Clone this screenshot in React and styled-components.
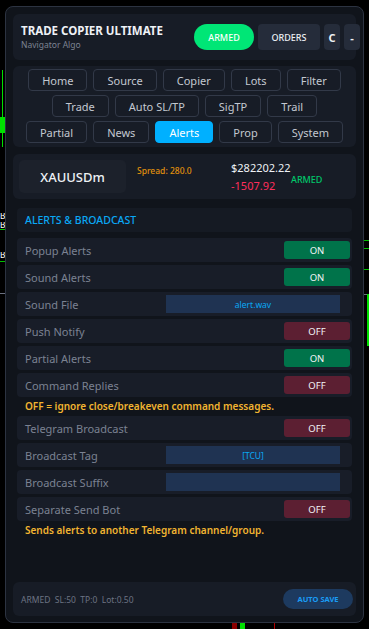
import React from 'react'
import styled, { createGlobalStyle } from 'styled-components'

const GlobalStyle = createGlobalStyle`
  html, body {
    margin: 0;
    padding: 0;
    background: #000;
  }
  body {
    font-family: "Noto Sans", "Open Sans", sans-serif;
  }
  * { box-sizing: border-box; }
`

const tabRows = [
  ['Home', 'Source', 'Copier', 'Lots', 'Filter'],
  ['Trade', 'Auto SL/TP', 'SigTP', 'Trail'],
  ['Partial', 'News', 'Alerts', 'Prop', 'System'],
]

const rows = [
  { label: 'Popup Alerts', kind: 'toggle', on: true },
  { label: 'Sound Alerts', kind: 'toggle', on: true },
  { label: 'Sound File', kind: 'input', value: 'alert.wav' },
  { label: 'Push Notify', kind: 'toggle', on: false },
  { label: 'Partial Alerts', kind: 'toggle', on: true },
  { label: 'Command Replies', kind: 'toggle', on: false },
  { note: 'OFF = ignore close/breakeven command messages.' },
  { label: 'Telegram Broadcast', kind: 'toggle', on: false },
  { label: 'Broadcast Tag', kind: 'input', value: '[TCU]' },
  { label: 'Broadcast Suffix', kind: 'input', value: '' },
  { label: 'Separate Send Bot', kind: 'toggle', on: false },
  { note: 'Sends alerts to another Telegram channel/group.' },
]

const App = () => {
  return (
    <Screen>
      <GlobalStyle />
      <ChartBits>
        <Wick $x={2} $y={70} $h={77} />
        <Body $x={0} $y={117} $w={5} $h={16} />
        <Tick $x={0} $y={213}>B</Tick>
        <Tick $x={0} $y={222}>B</Tick>
        <Tick $x={0} $y={252}>B</Tick>
        <HLine $x={0} $y={229} $w={5} $c="#00c000" />
        <HLine $x={0} $y={261} $w={5} $c="#00c000" />
        <HLine $x={0} $y={293} $w={5} $c="#6a7080" />
        <HLine $x={364} $y={240} $w={5} $c="#00c000" />
        <HLine $x={364} $y={248} $w={5} $c="#00c000" />
        <HLine $x={364} $y={269} $w={5} $c="#00c000" />
        <HLine $x={364} $y={294} $w={5} $c="#6a7080" />
        <Body $x={367} $y={294} $w={2} $h={52} />
        <Block $x={232} $y={623} $w={5} $h={6} $c="#8a0000" />
        <Block $x={240} $y={623} $w={5} $h={6} $c="#00e000" />
        <Block $x={274} $y={623} $w={1} $h={6} $c="#b00000" />
      </ChartBits>

      <Panel>
        <HeaderCard>
          <Brand>
            <Title>TRADE COPIER ULTIMATE</Title>
            <Sub>Navigator Algo</Sub>
          </Brand>
          <HeaderButtons>
            <ArmedPill>ARMED</ArmedPill>
            <HeadBtn $w={62}>ORDERS</HeadBtn>
            <HeadBtn $w={16} $big>C</HeadBtn>
            <HeadBtn $w={16} $big>-</HeadBtn>
          </HeaderButtons>
        </HeaderCard>

        <TabsCard>
          {tabRows.map((r, i) => (
            <TabRow key={i}>
              {r.map((t) => (
                <Tab key={t} $active={t === 'Alerts'}>{t}</Tab>
              ))}
            </TabRow>
          ))}
        </TabsCard>

        <SymbolCard>
          <SymbolBox>XAUUSDm</SymbolBox>
          <Spread>Spread: 280.0</Spread>
          <Money>
            <Balance>$282202.22</Balance>
            <Pnl>-1507.92</Pnl>
          </Money>
          <ArmedText>ARMED</ArmedText>
        </SymbolCard>

        <Content>
          <SectionHead>ALERTS &amp; BROADCAST</SectionHead>
          {rows.map((r, i) =>
            r.note ? (
              <Note key={i}>{r.note}</Note>
            ) : (
              <Row key={i}>
                <Label>{r.label}</Label>
                {r.kind === 'toggle' ? (
                  <Toggle $on={r.on}>{r.on ? 'ON' : 'OFF'}</Toggle>
                ) : (
                  <Field>{r.value}</Field>
                )}
              </Row>
            )
          )}
        </Content>

        <Footer>
          <Status>ARMED&nbsp; SL:50&nbsp; TP:0&nbsp; Lot:0.50</Status>
          <SaveBtn>AUTO SAVE</SaveBtn>
        </Footer>
      </Panel>
    </Screen>
  )
}

export default App

const Screen = styled.div`
  position: relative;
  width: 369px;
  height: 629px;
  overflow: hidden;
  background: #000;
  padding: 6px 5px 6px 5px;
`

const ChartBits = styled.div`
  position: absolute;
  inset: 0;
`

const Wick = styled.div`
  position: absolute;
  left: ${(p) => p.$x}px;
  top: ${(p) => p.$y}px;
  width: 1px;
  height: ${(p) => p.$h}px;
  background: #00e000;
`

const Body = styled.div`
  position: absolute;
  left: ${(p) => p.$x}px;
  top: ${(p) => p.$y}px;
  width: ${(p) => p.$w}px;
  height: ${(p) => p.$h}px;
  background: #00e000;
`

const Block = styled.div`
  position: absolute;
  left: ${(p) => p.$x}px;
  top: ${(p) => p.$y}px;
  width: ${(p) => p.$w}px;
  height: ${(p) => p.$h}px;
  background: ${(p) => p.$c};
`

const HLine = styled.div`
  position: absolute;
  left: ${(p) => p.$x}px;
  top: ${(p) => p.$y}px;
  width: ${(p) => p.$w}px;
  height: 1px;
  background: ${(p) => p.$c};
`

const Tick = styled.div`
  position: absolute;
  left: ${(p) => p.$x}px;
  top: ${(p) => p.$y}px;
  font-family: "DejaVu Sans", sans-serif;
  font-size: 8px;
  line-height: 8px;
  height: 8px;
  overflow: hidden;
  color: #fff;
`

const Panel = styled.div`
  position: relative;
  height: 617px;
  background: #10141b;
  border: 1px solid #2c3341;
  border-radius: 8px;
  padding: 7px 7px 6px 7px;
  display: flex;
  flex-direction: column;
`

const HeaderCard = styled.div`
  height: 46px;
  background: #171c26;
  border-radius: 6px;
  display: flex;
  align-items: center;
  justify-content: space-between;
  padding: 0 0 0 8px;
`

const Brand = styled.div`
  display: flex;
  flex-direction: column;
`

const Title = styled.div`
  font-size: 11.5px;
  font-weight: 700;
  color: #eef1f5;
  line-height: 15px;
`

const Sub = styled.div`
  font-size: 8.5px;
  color: #7d8392;
  line-height: 12px;
  margin-top: 1px;
`

const HeaderButtons = styled.div`
  display: flex;
  gap: 4px;
  margin-right: -4px;
`

const ArmedPill = styled.div`
  width: 60px;
  height: 26px;
  border-radius: 13px;
  background: #00e676;
  color: #fff;
  font-size: 9px;
  font-weight: 500;
  display: flex;
  align-items: center;
  justify-content: center;
`

const HeadBtn = styled.div`
  width: ${(p) => p.$w}px;
  height: 26px;
  border-radius: 4px;
  background: #252c3a;
  color: #eef1f5;
  font-size: ${(p) => (p.$big ? '11px' : '9px')};
  font-weight: ${(p) => (p.$big ? 700 : 500)};
  display: flex;
  align-items: center;
  justify-content: center;
`

const TabsCard = styled.div`
  margin-top: 6px;
  height: 81px;
  background: #171c26;
  border-radius: 6px;
  padding: 3px 0;
  display: flex;
  flex-direction: column;
  gap: 4px;
`

const TabRow = styled.div`
  display: flex;
  justify-content: center;
  gap: 6px;
`

const Tab = styled.div`
  height: 22px;
  padding: 0 13px;
  min-width: 50px;
  border-radius: 4px;
  border: 1px solid ${(p) => (p.$active ? '#00b0ff' : '#323948')};
  background: ${(p) => (p.$active ? '#00b0ff' : 'transparent')};
  color: ${(p) => (p.$active ? '#ffffff' : '#c3c8d1')};
  font-size: 11px;
  display: flex;
  align-items: center;
  justify-content: center;
`

const SymbolCard = styled.div`
  margin-top: 7px;
  height: 45px;
  background: #171c26;
  border-radius: 6px;
  padding: 6px;
  display: flex;
  align-items: center;
`

const SymbolBox = styled.div`
  width: 107px;
  height: 33px;
  border-radius: 5px;
  background: #1c212b;
  color: #eef1f5;
  font-size: 13px;
  font-weight: 500;
  display: flex;
  align-items: center;
  justify-content: center;
`

const Spread = styled.div`
  margin-left: 11px;
  align-self: flex-start;
  margin-top: 5px;
  font-size: 8.5px;
  font-weight: 500;
  color: #e0900c;
  width: 94px;
`

const Money = styled.div`
  display: flex;
  flex-direction: column;
  gap: 3px;
  width: 60px;
`

const Balance = styled.div`
  font-size: 11px;
  color: #eef1f5;
  line-height: 15px;
`

const Pnl = styled.div`
  font-size: 11px;
  color: #ff2e5c;
  line-height: 15px;
`

const ArmedText = styled.div`
  font-size: 9px;
  color: #00c86a;
  font-weight: 500;
  margin-top: 5px;
`

const Content = styled.div`
  flex: 1;
  padding: 9px 4px 0 4px;
  display: flex;
  flex-direction: column;
  gap: 3px;
`

const SectionHead = styled.div`
  height: 24px;
  background: #151a23;
  border-radius: 4px;
  padding-left: 8px;
  margin-bottom: 3px;
  display: flex;
  align-items: center;
  color: #0aa8f5;
  font-size: 10.5px;
  font-weight: 500;
`

const Row = styled.div`
  height: 24px;
  background: #181d28;
  border-radius: 4px;
  padding: 0 2px 0 8px;
  display: flex;
  align-items: center;
  justify-content: space-between;
`

const Label = styled.div`
  font-size: 11px;
  color: #7b8292;
`

const Toggle = styled.div`
  width: 66px;
  height: 18px;
  border-radius: 3px;
  background: ${(p) => (p.$on ? '#00734a' : '#5c1f32')};
  color: #f3f5f8;
  font-size: 9.5px;
  display: flex;
  align-items: center;
  justify-content: center;
`

const Field = styled.div`
  width: 174px;
  height: 18px;
  margin-right: 10px;
  background: #1f3352;
  color: #0aa8f5;
  font-size: 8.5px;
  display: flex;
  align-items: center;
  justify-content: center;
`

const Note = styled.div`
  font-size: 10px;
  font-weight: 600;
  color: #f2b431;
  padding-left: 8px;
  line-height: 13px;
  height: 13px;
`

const Footer = styled.div`
  height: 34px;
  background: #171c26;
  border-radius: 6px;
  padding: 0 3px 0 8px;
  display: flex;
  align-items: center;
  justify-content: space-between;
`

const Status = styled.div`
  font-size: 8.5px;
  color: #6c7383;
`

const SaveBtn = styled.div`
  width: 70px;
  height: 20px;
  border-radius: 10px;
  background: #1d3a5f;
  color: #1a9cf5;
  font-size: 7.5px;
  font-weight: 700;
  display: flex;
  align-items: center;
  justify-content: center;
`
